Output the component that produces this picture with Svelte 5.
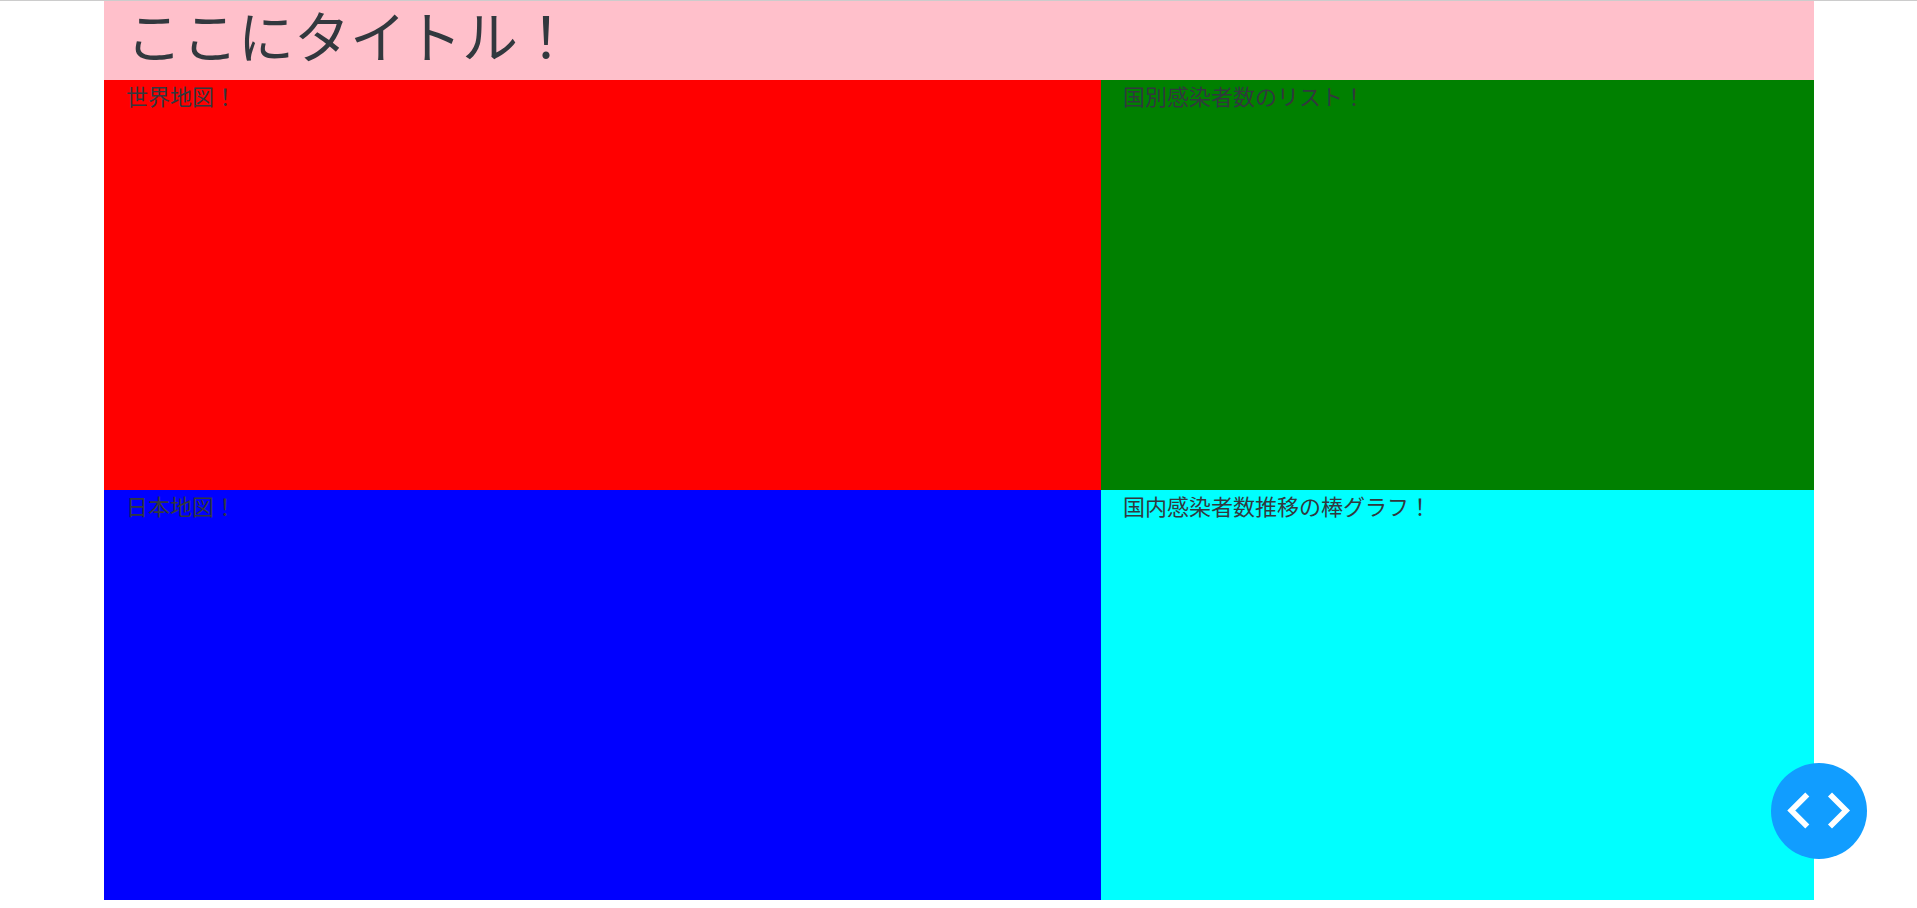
<script lang="ts">
	const title = 'ここにタイトル！';

	const rows = [
		[
			{ text: '世界地図！', kind: 'world' },
			{ text: '国別感染者数のリスト！', kind: 'countries' }
		],
		[
			{ text: '日本地図！', kind: 'japan' },
			{ text: '国内感染者数推移の棒グラフ！', kind: 'trend' }
		]
	];

	let menuOpen = $state(false);
</script>

<div class="page">
	<main class="container">
		<header class="header">
			<h1>{title}</h1>
		</header>

		{#each rows as row}
			<div class="row">
				{#each row as panel}
					<section class="panel {panel.kind}">
						<p>{panel.text}</p>
					</section>
				{/each}
			</div>
		{/each}
	</main>

	<button
		class="debug-btn"
		type="button"
		aria-label="Debug menu"
		aria-expanded={menuOpen}
		onclick={() => (menuOpen = !menuOpen)}
	>
		<svg viewBox="0 0 96 96" aria-hidden="true">
			<path d="M36.3 31.5 L20.3 47.5 L36.3 63.5" />
			<path d="M59 31.5 L75 47.5 L59 63.5" />
		</svg>
	</button>
</div>

<style>
	:global(body) {
		margin: 0;
		background: #fff;
	}

	.page {
		border-top: 1px solid #ccc;
		font-family: 'Liberation Sans', 'Noto Sans CJK JP', sans-serif;
		color: #32383e;
	}

	.container {
		padding: 0 103px 0 104px;
	}

	.header {
		padding: 0 22px 3px;
		background: pink;
	}

	h1 {
		margin: 0;
		font-size: 56px;
		font-weight: 400;
		line-height: 76px;
	}

	.row {
		display: grid;
		grid-template-columns: 58.3% 1fr;
	}

	.panel {
		min-height: 410px;
		padding: 0 22px;
		box-sizing: border-box;
	}

	.panel p {
		margin: 0;
		font-size: 22px;
		line-height: 35px;
	}

	.world { background: red; }
	.countries { background: green; }
	.japan { background: blue; }
	.trend { background: cyan; }

	.debug-btn {
		position: fixed;
		right: 50px;
		bottom: 49px;
		width: 96px;
		height: 96px;
		padding: 0;
		border: none;
		border-radius: 50%;
		background: #119dff;
		cursor: pointer;
	}

	.debug-btn svg {
		display: block;
		width: 100%;
		height: 100%;
	}

	.debug-btn path {
		fill: none;
		stroke: #fff;
		stroke-width: 5.7;
	}
</style>
